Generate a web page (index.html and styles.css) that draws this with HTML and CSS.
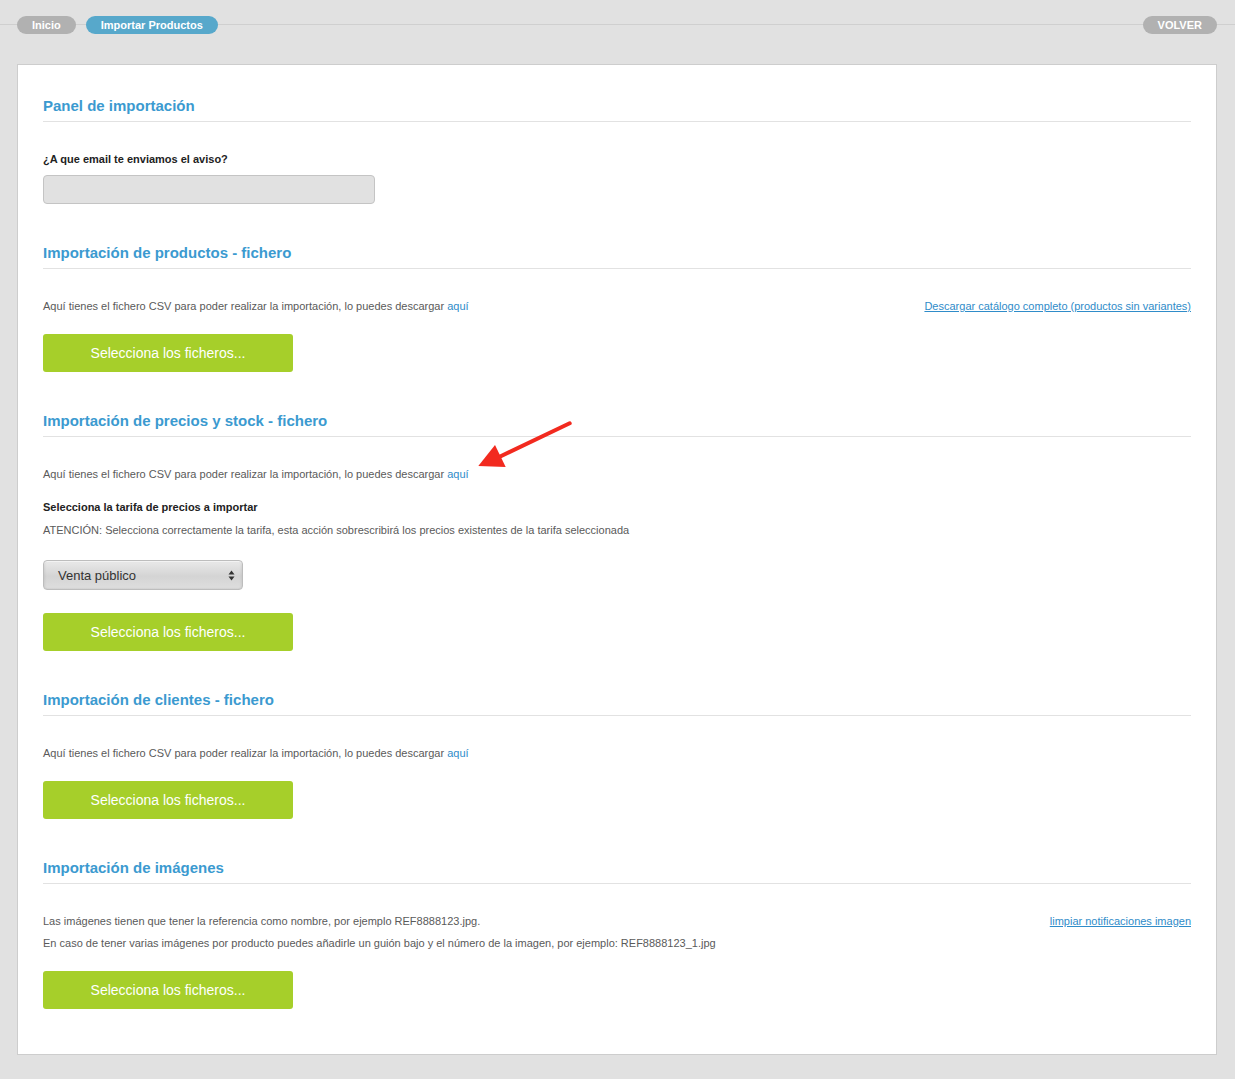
FILE: index.html
```html
<!DOCTYPE html>
<html lang="es">
<head>
<meta charset="utf-8">
<title>Importar Productos</title>
<link rel="stylesheet" href="styles.css">
</head>
<body>
<nav class="topbar">
  <div class="crumbs">
    <a class="pill pill-gray" href="#">Inicio</a>
    <a class="pill pill-blue" href="#">Importar Productos</a>
  </div>
  <a class="pill pill-gray pill-back" href="#">VOLVER</a>
</nav>

<main class="card">
  <section class="sec">
    <h2 class="sec-title">Panel de importación</h2>
    <p class="label label-first">¿A que email te enviamos el aviso?</p>
    <input class="email" type="text">
  </section>

  <section class="sec">
    <h2 class="sec-title">Importación de productos - fichero</h2>
    <div class="row">
      <p class="txt">Aquí tienes el fichero CSV para poder realizar la importación, lo puedes descargar <a class="link" href="#">aquí</a></p>
      <a class="ulink" href="#">Descargar catálogo completo (productos sin variantes)</a>
    </div>
    <button class="btn">Selecciona los ficheros...</button>
  </section>

  <section class="sec">
    <h2 class="sec-title">Importación de precios y stock - fichero</h2>
    <p class="txt first">Aquí tienes el fichero CSV para poder realizar la importación, lo puedes descargar <a class="link" href="#">aquí</a></p>
    <p class="label label-tarifa">Selecciona la tarifa de precios a importar</p>
    <p class="txt attn">ATENCIÓN: Selecciona correctamente la tarifa, esta acción sobrescribirá los precios existentes de la tarifa seleccionada</p>
    <div class="select">
      <span class="select-val">Venta público</span>
      <svg class="select-arrows" width="7" height="11" viewBox="0 0 7 11"><path d="M3.5 0.5 L6.5 4.5 L0.5 4.5 Z M3.5 10.5 L6.5 6.5 L0.5 6.5 Z" fill="#333"/></svg>
    </div>
    <button class="btn btn-after-select">Selecciona los ficheros...</button>
  </section>

  <section class="sec">
    <h2 class="sec-title">Importación de clientes - fichero</h2>
    <p class="txt first">Aquí tienes el fichero CSV para poder realizar la importación, lo puedes descargar <a class="link" href="#">aquí</a></p>
    <button class="btn">Selecciona los ficheros...</button>
  </section>

  <section class="sec">
    <h2 class="sec-title">Importación de imágenes</h2>
    <div class="row">
      <div>
        <p class="txt">Las imágenes tienen que tener la referencia como nombre, por ejemplo REF8888123.jpg.</p>
        <p class="txt second">En caso de tener varias imágenes por producto puedes añadirle un guión bajo y el número de la imagen, por ejemplo: REF8888123_1.jpg</p>
      </div>
      <a class="ulink" href="#">limpiar notificaciones imagen</a>
    </div>
    <button class="btn">Selecciona los ficheros...</button>
  </section>

  <svg class="annot-arrow" width="110" height="70" viewBox="0 0 110 70">
    <line x1="98.7" y1="12.3" x2="24" y2="48" stroke="#f22a1f" stroke-width="4" stroke-linecap="round"/>
    <polygon points="7.3,55 24,34 34.7,56" fill="#f22a1f"/>
  </svg>
</main>
</body>
</html>
```

FILE: styles.css
```css
html, body {
  margin: 0;
  padding: 0;
}
body {
  background: #e1e1e1;
  font-family: "Liberation Sans", Arial, Helvetica, sans-serif;
  color: #333;
  padding: 16px 18px 25px 17px;
}
p { margin: 0; }

.topbar {
  display: flex;
  justify-content: space-between;
  align-items: center;
  height: 18px;
  margin: 0 -18px 0 -17px;
  padding: 0 18px 0 17px;
  background: linear-gradient(#e1e1e1 0, #e1e1e1 8px, #cfcfcf 8px, #cfcfcf 9px, #e1e1e1 9px);
}
.crumbs {
  display: flex;
  gap: 10px;
}
.pill {
  display: inline-block;
  height: 18px;
  line-height: 18px;
  border-radius: 9px;
  padding: 0 15px;
  font-size: 11px;
  font-weight: bold;
  color: #fff;
  text-decoration: none;
}
.pill-gray { background: #b1b1b1; }
.pill-blue { background: #57a8cb; }
.pill-back { padding: 0 15px; }

.card {
  position: relative;
  margin-top: 30px;
  background: #fff;
  border: 1px solid #cdcdcd;
  padding: 31px 25px 45px 25px;
}

.sec + .sec { margin-top: 39px; }
.sec-title {
  margin: 0;
  font-size: 15px;
  line-height: 20px;
  font-weight: bold;
  color: #3b9ad0;
  padding-bottom: 5px;
  border-bottom: 1px solid #e2e2e2;
}

.label {
  font-size: 11px;
  line-height: 16px;
  font-weight: bold;
  color: #222;
}
.label-first { margin-top: 29px; }
.label-tarifa { margin-top: 17px; }

.email {
  display: block;
  box-sizing: border-box;
  margin-top: 8px;
  width: 332px;
  height: 29px;
  background: #e1e1e1;
  border: 1px solid #c4c4c4;
  border-radius: 4px;
  padding: 0;
}

.row {
  display: flex;
  justify-content: space-between;
  align-items: flex-start;
  margin-top: 29px;
}
.txt {
  font-size: 11px;
  line-height: 16px;
  color: #5a5a5a;
}
.txt.first { margin-top: 29px; }
.txt.second { margin-top: 6px; }
.txt.attn { margin-top: 7px; }
.link {
  color: #2f8cc9;
  text-decoration: none;
}
.ulink {
  font-size: 11px;
  line-height: 16px;
  color: #2f8cc9;
  text-decoration: underline;
}

.btn {
  display: block;
  margin-top: 20px;
  width: 250px;
  height: 38px;
  border: 0;
  border-radius: 3px;
  background: #a6cf2a;
  color: #fff;
  font-family: "Liberation Sans", Arial, Helvetica, sans-serif;
  font-size: 14px;
  padding: 0;
}
.btn-after-select { margin-top: 23px; }

.select {
  display: flex;
  align-items: center;
  justify-content: space-between;
  box-sizing: border-box;
  margin-top: 22px;
  width: 200px;
  height: 30px;
  padding: 0 7px 0 14px;
  border: 1px solid #bdbdbd;
  border-radius: 4px;
  background: linear-gradient(#e9e9e9, #d4d4d4 55%, #dedede);
  box-shadow: inset 0 1px 1px rgba(255,255,255,0.7), inset 1px 0 2px rgba(0,0,0,0.08), inset -1px 0 2px rgba(0,0,0,0.08);
}
.select-val {
  font-size: 13px;
  color: #333;
}

.annot-arrow {
  position: absolute;
  left: 453px;
  top: 346px;
}
```
